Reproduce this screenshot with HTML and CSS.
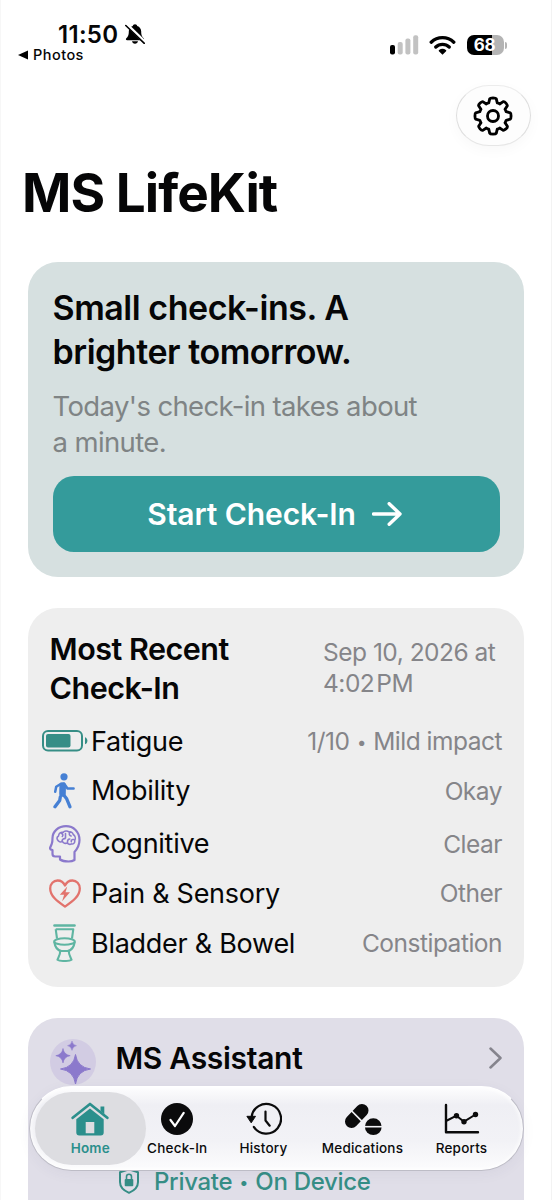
FILE: index.html
```html
<!DOCTYPE html>
<html lang="en">
<head>
<meta charset="utf-8">
<title>MS LifeKit</title>
<link rel="stylesheet" href="styles.css">
</head>
<body>
<div class="phone">
  <header class="status">
    <div class="status-left">
      <div class="clock"><span class="time">11:50</span>
        <svg class="bell" viewBox="0 0 20 20"><path d="M10 .2c1.300 0 2 .8 2.200 1.700 2.600.8 4 3 4 5.600 0 4 1 5.300 2.500 6.800.8.900.4 2-.8 2H2.100c-1.200 0-1.600-1.100-.8-2C2.800 12.800 3.800 11.500 3.800 7.500c0-2.600 1.400-4.800 4-5.600C8 1 8.700.2 10 .2zM7 17.300h6c-.3 1.600-1.400 2.500-3 2.500s-2.700-.9-3-2.500z"/><path d="M1.700 .6 20 18.300" stroke="#fff" stroke-width="3.400"/><path d="M.8 1.500 19.300 19.300" stroke="#000" stroke-width="1.600" stroke-linecap="round"/></svg>
      </div>
      <div class="back"><svg viewBox="0 0 10 10"><path d="M0 5 10 .5v9z"/></svg><span>Photos</span></div>
    </div>
    <div class="status-right">
      <svg class="signal" viewBox="0 0 29 20"><rect x="0" y="10" width="5" height="9.500" rx="2" fill="#000"/><rect x="7.700" y="7" width="5" height="12.500" rx="2"/><rect x="15.400" y="3.500" width="5" height="16" rx="2"/><rect x="23.200" y=".3" width="5" height="19.200" rx="2"/></svg>
      <svg class="wifi" viewBox="0 0 27 20"><path d="M2.200 7.200a16.300 16.300 0 0 1 22.600 0M6.800 12a9.700 9.700 0 0 1 13.400 0" fill="none" stroke="#000" stroke-width="3.300" stroke-linecap="round"/><path d="M13.500 19.700 9.900 16.200c-.4-.5-.3-.9.200-1.200a6 6 0 0 1 6.800 0c.5.300.6.700.2 1.200z"/></svg>
      <div class="charge"><div class="charge-body">68</div><div class="charge-tip"></div></div>
    </div>
  </header>

  <div class="toolbar">
    <button class="settings" aria-label="Settings"><svg viewBox="-20 -20 40 40"><path d="M-3.400-18.200Q-3-19 0-19T3.400-18.200L4.500-13.800Q6-13.500 7-12.700L10.800-15.100Q12-15.500 13.600-13.600T15.100-10.800L12.700-7Q13.500-6 13.800-4.500L18.200-3.400Q19-3 19 0T18.200 3.400L13.800 4.500Q13.500 6 12.700 7L15.100 10.800Q15.500 12 13.600 13.600T10.800 15.100L7 12.700Q6 13.500 4.500 13.800L3.400 18.200Q3 19 0 19T-3.400 18.200L-4.500 13.800Q-6 13.500-7 12.700L-10.800 15.100Q-12 15.500-13.600 13.600T-15.100 10.800L-12.700 7Q-13.500 6-13.800 4.500L-18.200 3.400Q-19 3-19 0T-18.200-3.400L-13.800-4.500Q-13.500-6-12.700-7L-15.100-10.800Q-15.500-12-13.600-13.600T-10.800-15.100L-7-12.700Q-6-13.500-4.500-13.800Z"/><circle r="5.800"/></svg></button>
  </div>

  <h1 class="title">MS LifeKit</h1>

  <main class="cards">
    <section class="card hero">
      <h2 class="hero-title">Small check-ins. A<br>brighter tomorrow.</h2>
      <p class="hero-text">Today's check-in takes about<br>a minute.</p>
      <button class="start"><span>Start Check-In</span><svg viewBox="0 0 30 24"><path d="M1.500 12H28M17.200 1.700 28 12 17.200 22.300"/></svg></button>
    </section>

    <section class="card recent">
      <div class="recent-head">
        <h3>Most Recent<br>Check-In</h3>
        <p>Sep 10, 2026 at<br>4:02<span class="thin"></span>PM</p>
      </div>
      <ul class="rows">
        <li><span class="ico"><svg class="i-battery" viewBox="0 0 46 22"><rect x="1" y="1" width="39" height="19.500" rx="5" fill="none" stroke="#368e86" stroke-width="2"/><rect x="4" y="4" width="24.500" height="13.500" rx="2" fill="#368e86"/><path d="M43 7.200c3.200 1 3.200 6 0 7z" fill="#368e86"/></svg></span><span class="label">Fatigue</span><span class="value">1/10 <b>•</b> Mild impact</span></li>
        <li><span class="ico"><svg class="i-walk" viewBox="0 0 22 36"><g fill="none" stroke="#4680d4" stroke-linecap="round" stroke-linejoin="round"><path d="M9.700 12.500 9.500 20.500" stroke-width="6.600"/><path d="M8 10.800 3.200 13.800 2.200 18.800" stroke-width="2.500"/><path d="M11 10.500 14.500 15.500H20.600" stroke-width="2.500"/><path d="M10.300 21.500 13.700 25.800 17 33.800" stroke-width="3.300"/><path d="M7.300 24 6.700 27.500 2 33.800" stroke-width="3.300"/></g><circle cx="11" cy="3.800" r="3.600" fill="#4680d4"/></svg></span><span class="label">Mobility</span><span class="value">Okay</span></li>
        <li class="cog"><span class="ico"><svg class="i-head" viewBox="0 0 32 38"><g fill="none" stroke="#8b79cc" stroke-width="2.200" stroke-linejoin="round" stroke-linecap="round"><path d="M11 31.500v3c2 1.400 5 2 8.500 2s4.500-.5 6-1.500V27c3.500-4 5-7 5-12C30.500 6.500 24.500 1.200 17 1.200S3.500 6.500 3.500 13c0 3 0 4.500-.8 6L1.200 22.500c-.4 1 .2 2 1.300 2.300l1 .3v4c0 1.800 1 2.400 2.700 2.400z"/><path stroke-width="1.600" d="M9.500 16c-2-1.500-2-4 0-5 .3-3 2.500-4 4.500-3.600 1.500-1.800 4.500-1.900 6-.4 2-.5 4 .8 4.200 2.500 2 1.200 2.600 4 1.500 6 .5 2.300-1.400 4-3.200 3.400-1.500 1-3.300.5-4-1-2 1-4.500.5-5-1.500-1.500.9-3 .5-4-.4zM12.500 8.500c1.500.5 1.800 2 .8 3M16.500 8.500v4.500M13 16.200c.3-2 1.500-2.800 3-2.500M20.500 8c-.6 1.500.2 2.700 1.600 3M18.500 17.500c-.2-2 .6-3.500 2.300-3.500M24.500 14.500c-1.600-.3-2.500.8-2.200 2.200"/></g></svg></span><span class="label">Cognitive</span><span class="value">Clear</span></li>
        <li><span class="ico"><svg class="i-heart" viewBox="0 0 32 29"><path d="M16 27.600C8 22 1.200 17 1.200 9.400 1.200 4.800 4.500 1.500 8.600 1.500c3.200 0 5.900 1.800 7.400 5 1.500-3.200 4.200-5 7.400-5 4.100 0 7.400 3.300 7.400 7.900C30.800 17 24 22 16 27.600z" fill="none" stroke="#e2736d" stroke-width="2.300" stroke-linejoin="round"/><path d="M18.300 7.500 10.800 15.800h4.300l-2 6.500 7.900-9h-4.500z" fill="#e2736d"/></svg></span><span class="label">Pain &amp; Sensory</span><span class="value">Other</span></li>
        <li><span class="ico"><svg class="i-toilet" viewBox="0 0 23 38"><g fill="none" stroke="#5fb5a2" stroke-width="2.100" stroke-linejoin="round"><path d="M1.500 1.500H21.500" stroke-width="2.600" stroke-linecap="round"/><path d="M2.700 5.200H20.300L19 14.500M2.700 5.200 4 14.500"/><ellipse cx="11.500" cy="17.500" rx="10.300" ry="3.300"/><path d="M1.300 18C2 23 5 26.500 8.500 27h6c3.500-.5 6.500-4 7.200-9M7.200 26.500c.3 4-1.600 6.500-2.700 9.200 2 1.700 12 1.700 14 0-1.100-2.700-3-5.200-2.700-9.200"/></g></svg></span><span class="label">Bladder &amp; Bowel</span><span class="value">Constipation</span></li>
      </ul>
    </section>

    <section class="card assistant">
      <div class="assistant-head">
        <span class="spark"><svg viewBox="0 0 46 46"><g fill="#8b79cc"><path d="M25.500 15.500Q27.300 28.300 40.500 30 27.300 31.700 25.500 45 23.700 31.700 10.500 30 23.700 28.300 25.500 15.500z" stroke="#8b79cc" stroke-linejoin="round"/><path d="M13 9.500Q14 15.700 20.200 16.700 14 17.700 13 24 12 17.700 5.800 16.700 12 15.700 13 9.500z" stroke="#8b79cc" stroke-width=".6"/><path d="M22 2Q22.700 6 26.500 6.700 22.700 7.400 22 11.400 21.300 7.400 17.500 6.700 21.300 6 22 2z" stroke="#8b79cc" stroke-width=".4"/></g></svg></span>
        <h3>MS Assistant</h3>
        <svg class="chev" viewBox="0 0 13 22"><path d="M1.500 1.500 11.500 11 1.500 20.500"/></svg>
      </div>
      <div class="private"><svg viewBox="0 0 22 26"><path d="M11 1.200 20 4.200V14c0 5-3.500 8.500-9 10.800C5.500 22.500 2 19 2 14V4.200z" fill="none" stroke="#368e86" stroke-width="2" stroke-linejoin="round"/><rect x="6.700" y="11" width="8.600" height="7.300" rx="1" fill="#368e86"/><path d="M8.500 11V8.700a2.500 2.500 0 0 1 5 0V11" fill="none" stroke="#368e86" stroke-width="1.600"/></svg><span>Private <b>•</b> On Device</span></div>
    </section>
  </main>

  <nav class="tabs">
    <a class="tab t-home on"><svg viewBox="0 0 38 34"><path d="M1.700 15.800 19 2 36.300 15.800" fill="none" stroke="#2b8f8c" stroke-width="2.700" stroke-linecap="round" stroke-linejoin="round"/><path fill="#2b8f8c" fill-rule="evenodd" d="M19 6.500 32.700 17.300V30.500q0 3-3 3H8.300q-3 0-3-3V17.300zM14.700 20v11.200h8.600V20zM29.500 4.500h3.800V12l-3.800-3z"/></svg><span>Home</span></a>
    <a class="tab t-check"><svg viewBox="0 0 34 34"><circle cx="17" cy="17" r="16"/><path d="M10.500 18 15 24 23.700 10.800" fill="none" stroke="#fff" stroke-width="2.200" stroke-linecap="round" stroke-linejoin="round"/></svg><span>Check-In</span></a>
    <a class="tab t-history"><svg viewBox="0 0 36 34"><path d="M5.500 15.500A14.800 14.800 0 1 1 7.800 24.800" fill="none" stroke="#0b0b0c" stroke-width="2.200" stroke-linecap="round"/><path d="M.9 14.300h8.600L5.200 20.800z" stroke="#0b0b0c" stroke-linejoin="round"/><path d="M19.500 9.500V18.500L23.700 23.700" fill="none" stroke="#0b0b0c" stroke-width="2.200" stroke-linecap="round" stroke-linejoin="round"/></svg><span>History</span></a>
    <a class="tab t-meds"><svg viewBox="0 0 38 34"><path d="M7.500 19.500 18 8.500" stroke="#0b0b0c" stroke-width="13" stroke-linecap="round"/><path d="M7.200 8.500 18.500 19.800" stroke="#f1f1f5" stroke-width="1.700"/><circle cx="29.300" cy="24.700" r="9.500" fill="#f1f1f5"/><circle cx="29.300" cy="24.700" r="8.400"/><path d="M20 24.700H39" stroke="#f1f1f5" stroke-width="1.600"/></svg><span>Medications</span></a>
    <a class="tab t-reports"><svg viewBox="0 0 36 34"><g fill="none" stroke="#0b0b0c" stroke-width="2.400" stroke-linecap="round" stroke-linejoin="round"><path d="M2 3V30.300H34"/><path d="M3 18.500 12.500 13.700 20 19.700 31.500 12.500" stroke-width="2"/></g><circle cx="12.500" cy="13.700" r="2.700"/><circle cx="20" cy="19.700" r="2.700"/><circle cx="31.500" cy="12.500" r="2.700"/></svg><span>Reports</span></a>
  </nav>
</div>
</body>
</html>
```
FILE: styles.css
```css
* { box-sizing: border-box; margin: 0; padding: 0; }
body { font-family: Inter, "Liberation Sans", sans-serif; color: #060607; background: #fff; }
h1, h2, h3, p, span { white-space: nowrap; }
svg { display: block; flex: none; }
button { border: 0; font: inherit; color: inherit; }

.phone { position: relative; width: 552px; height: 1200px; overflow: hidden; background: #fff; border-left: 1px solid #f7f7f7; border-right: 1px solid #f3f3f3; }

.status { display: flex; justify-content: space-between; height: 85px; padding: 21px 44px 0 17px; }
.clock { display: flex; align-items: center; gap: 7px; height: 26px; padding-left: 40px; }
.time { font-size: 24px; font-weight: 600; letter-spacing: .3px; }
.bell { width: 20px; height: 20px; }
.back { display: flex; align-items: center; gap: 5px; height: 15px; font-size: 14.5px; font-weight: 500; letter-spacing: .45px; }
.back svg { width: 10px; height: 10px; }
.status-right { display: flex; align-items: center; height: 48px; }
.signal { width: 29px; height: 20px; fill: #c2c2c2; }
.wifi { width: 27px; height: 20px; margin: 0 11px 0 10px; }
.charge { display: flex; align-items: center; gap: 1px; }
.charge-body { width: 37px; height: 20px; border-radius: 7px; background: linear-gradient(90deg, #000 25px, #b4b4b4 25px); color: #fff; font-size: 17px; font-weight: 700; line-height: 20px; text-align: center; letter-spacing: -.3px; padding-right: 2px; }
.charge-tip { width: 2px; height: 7px; border-radius: 0 3px 3px 0; background: #b4b4b4; }

.toolbar { display: flex; justify-content: flex-end; padding-right: 20.500px; }
.settings { display: grid; place-items: center; width: 75px; height: 61px; border-radius: 33px / 30.5px; background: #fdfdfd; border: 1px solid #dedede; border-top-color: #ececec; border-bottom-color: #e6e6e6; box-shadow: 0 4px 14px rgba(0,0,0,.03); }
.settings svg { width: 38px; height: 38px; margin-right: 1px; fill: none; stroke: #000; stroke-width: 3; stroke-linejoin: round; overflow: visible; }

.title { margin: 17px 0 0 21px; height: 60px; font-size: 53px; line-height: 61px; font-weight: 700; letter-spacing: -.95px; }

.cards { display: flex; flex-direction: column; gap: 31px; padding: 38.500px 27px 0; }
.card { border-radius: 30px; }

.hero { height: 315.500px; padding: 24px 24.500px; background: #d6e0e0; }
.hero-title { font-size: 34px; line-height: 44px; font-weight: 600; letter-spacing: -.46px; }
.hero-text { margin: 15.500px 0 15.500px; font-size: 27.500px; line-height: 35.700px; letter-spacing: -.63px; color: #7f8485; }
.start { display: flex; align-items: center; justify-content: center; gap: 16px; width: 100%; height: 76px; padding-right: 3px; border-radius: 21px; background: #349b9b; color: #fff; font-size: 30px; font-weight: 600; letter-spacing: -.1px; }
.start svg { width: 30px; height: 24px; fill: none; stroke: #fff; stroke-width: 3.400; stroke-linecap: round; stroke-linejoin: round; }

.recent { height: 378.500px; padding: 20.500px 22px 0; background: #eee; }
.recent-head { display: flex; align-items: center; justify-content: space-between; height: 79.500px; }
.recent-head h3 { font-size: 30.500px; line-height: 39.700px; font-weight: 600; letter-spacing: -.5px; margin-left: -.5px; }
.recent-head p { width: 179px; font-size: 24.500px; line-height: 31.400px; letter-spacing: -.5px; color: #858589; }
.thin { display: inline-block; width: 2px; }
.rows { list-style: none; padding-top: 8.500px; }
.rows li { display: flex; align-items: center; height: 49.600px; }
.rows .cog { margin-top: 3.400px; }
.ico { display: flex; justify-content: center; width: 29px; margin-right: 12px; }
.label { flex: 1; font-size: 27px; letter-spacing: -.27px; }
.value { font-size: 24.500px; letter-spacing: -.5px; color: #858589; }
b { display: inline-block; margin: 0 1px; font-size: .68em; font-weight: 400; transform: translateY(-.14em); }
.i-battery { width: 46px; height: 22px; }
.i-walk { width: 22px; height: 36px; margin-right: 2px; }
.i-head { width: 32px; height: 38px; }
.i-heart { width: 32px; height: 29px; }
.i-toilet { width: 23px; height: 38px; }

.assistant { height: 240px; padding: 20px 22px 0; background: #e0dee8; }
.assistant-head { display: flex; align-items: center; height: 46px; }
.spark { width: 46px; height: 46px; margin: 2px 19.500px 0 0; border-radius: 50%; background: #d2cce3; }
.assistant-head h3 { flex: 1; font-size: 30px; line-height: 40px; font-weight: 600; letter-spacing: -.3px; margin-top: -5px; }
.chev { width: 13px; height: 22px; margin: -5px .5px 0 0; fill: none; stroke: #85848d; stroke-width: 2.500; stroke-linecap: round; stroke-linejoin: round; }
.private { display: flex; align-items: center; gap: 14px; margin: 83.500px 0 0 68px; height: 28px; font-size: 24px; font-weight: 500; letter-spacing: -.3px; color: #368e86; }
.private svg { width: 22px; height: 26px; }

/* Floating tab bar over the scrolling content */
.tabs { position: absolute; left: 28px; top: 1086px; display: flex; width: 495px; height: 85px; padding: 5px 4.500px; border-radius: 43px; background: linear-gradient(#fdfdfe, #efeff4 22%, #f2f2f6 65%, #fcfcfd); border: 1px solid #bdbcc6; border-top-color: #fff; box-shadow: inset 0 0 4px 1px #fff, 0 3px 14px rgba(60,50,90,.05); }
.tab { display: flex; flex-direction: column; align-items: center; gap: 4px; height: 73px; padding-top: 10px; font-size: 13.500px; font-weight: 500; letter-spacing: .2px; line-height: 17px; color: #0b0b0c; fill: #0b0b0c; }
.tab svg { height: 34px; }
.on { border-radius: 37px; background: #dddde1; color: #2b8f8c; font-weight: 600; }
.t-home { width: 111.500px; }
.t-check { width: 62.500px; }
.t-history { width: 110px; }
.t-meds { width: 88px; }
.t-reports { width: 110px; }
```
